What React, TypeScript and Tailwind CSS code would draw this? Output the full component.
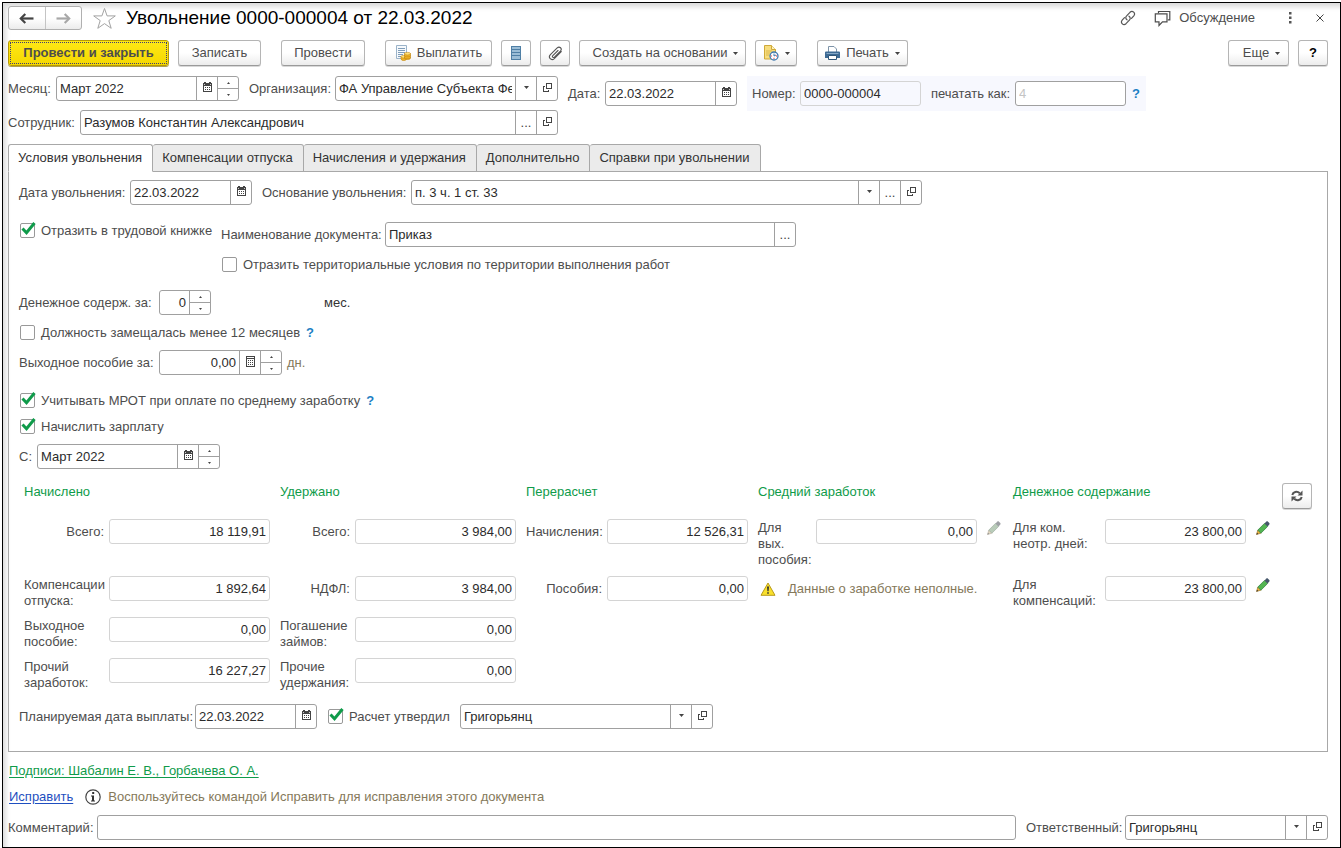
import React, { useState } from "react";
import { clsx } from "clsx";

/* ---------- icons ---------- */

const CalendarIcon = () => (
  <svg width="9" height="11" viewBox="0 0 9 11" shapeRendering="crispEdges">
    <path d="M0 1h9v9H0zM1 4v5h7V4z" fill="#444" fillRule="evenodd" />
    <path d="M1 0h2v1H1zM6 0h2v1H6z" fill="#444" />
    <path d="M1 2h1v1H1zM7 2h1v1H7z" fill="#ccc" />
    <path d="M2 5h1v1H2zM4 5h1v1H4zM6 5h1v1H6zM2 7h1v1H2zM4 7h1v1H4zM6 7h1v1H6z" fill="#444" />
  </svg>
);

const CalcIcon = () => (
  <svg width="9" height="11" viewBox="0 0 9 11" shapeRendering="crispEdges">
    <path d="M0 0h9v11H0zM1 3v7h7V3z" fill="#444" fillRule="evenodd" />
    <path d="M1 1h7v1H1z" fill="#fff" />
    <path d="M2 4h1v1H2zM4 4h1v1H4zM6 4h1v1H6zM2 6h1v1H2zM4 6h1v1H4zM6 6h1v1H6zM2 8h1v1H2zM4 8h1v1H4zM6 8h1v1H6z" fill="#444" />
  </svg>
);

const OpenIcon = () => (
  <svg width="9" height="9" viewBox="0 0 9 9" shapeRendering="crispEdges" fill="#444">
    <path d="M3 0h6v6H3zM4 1v4h4V1z" fillRule="evenodd" />
    <path d="M0 3h2v1H1v4h4V7h1v2H0z" />
  </svg>
);

const Caret = () => (
  <svg width="5" height="3" viewBox="0 0 5 3" className="shrink-0">
    <path d="M0 0h5L2.5 3z" fill="#444" />
  </svg>
);

const ArrowIcon = ({ color, flip }: { color: string; flip?: boolean }) => (
  <svg width="15" height="11" viewBox="0 0 15 11" className={flip ? "rotate-180" : ""}>
    <path d="M3 5.500H14.500" stroke={color} strokeWidth="2.200" />
    <path d="M6.300 1L1.800 5.500l4.500 4.500" fill="none" stroke={color} strokeWidth="2.200" />
  </svg>
);

const StarIcon = () => (
  <svg width="25" height="23" viewBox="0 0 25 23" fill="#fff" stroke="#a3a3a3">
    <path d="M12.500 1.500l2.600 7.400h8.200l-6.500 4.700 2.400 7.700-6.700-4.700-6.700 4.700 2.400-7.700-6.500-4.700h8.200z" />
  </svg>
);

const LinkIcon = () => (
  <svg width="16" height="16" viewBox="0 0 16 16" fill="none" stroke="#555" strokeWidth="1.200" strokeLinecap="round">
    <path d="M7 9.800c-1.500-1-1.600-2.700-.4-3.900L10 2.300c2.500-2.400 6 .8 3.800 3.500L11.500 8.300" />
    <path d="M9 6.200c1.500 1 1.600 2.700.4 3.900L6 13.700c-2.500 2.400-6-.8-3.800-3.500L4.500 7.700" />
  </svg>
);

const ChatIcon = () => (
  <svg width="17" height="17" viewBox="0 0 17 17" fill="none" stroke="#4d4d4d" strokeWidth="1.200">
    <path d="M4.500 3.300V1.500h11.300v8.300h-2" />
    <path d="M1.300 3.800h11.700v8H8.500L5 15.500v-3.700H1.300z" fill="#fff" />
  </svg>
);

const PayIcon = () => (
  <svg width="16" height="16" viewBox="0 0 16 16">
    <path d="M1.500.5h10v13h-10z" fill="#f6f9fc" stroke="#9bb3c9" />
    <path d="M3 3.500h7M3 5.500h7M3 7.500h7M3 9.500h5M3 11.500h4" stroke="#7f9db9" />
    <path d="M6 11.500v2.500c0 2 5.500 2 5.500 0v-2.500z" fill="#f0b323" stroke="#c08412" strokeWidth=".6" />
    <ellipse cx="8.700" cy="11.700" rx="2.800" ry="1.300" fill="#ffe27a" stroke="#c08412" strokeWidth=".6" />
    <path d="M9.500 8.500v4.500c0 2 6 2 6 0V8.500z" fill="#f0b323" stroke="#c08412" strokeWidth=".6" />
    <path d="M9.500 10.500c0 1.800 6 1.800 6 0M9.500 12.300c0 1.800 6 1.800 6 0" fill="none" stroke="#c08412" strokeWidth=".6" />
    <ellipse cx="12.500" cy="8.700" rx="3" ry="1.300" fill="#ffe27a" stroke="#c08412" strokeWidth=".6" />
  </svg>
);

const RegisterIcon = () => (
  <svg width="10" height="14" viewBox="0 0 10 14" shapeRendering="crispEdges">
    <path d="M0 0h10v14H0z" fill="#4f7fa5" />
    <path d="M1 1h8v2H1zM1 4h8v2H1zM1 7h8v2H1zM1 10h8v3H1z" fill="#9bbdd6" />
  </svg>
);

const ClipIcon = () => (
  <svg width="15" height="15" viewBox="0 0 15 15" fill="none" stroke="#555" strokeWidth="1.100" strokeLinecap="round">
    <path d="M10 4.500L4.800 9.600c-1.100 1.200.4 2.600 1.600 1.500l6-6c2.300-2.500-.9-5.300-3.200-3.200L2.400 8.600c-2.700 3 .9 6.700 3.900 4l7-6.900" />
  </svg>
);

const DocTimeIcon = () => (
  <svg width="16" height="16" viewBox="0 0 16 16">
    <path d="M1.500.5h7l4 4v9.500h-11z" fill="#f7dd7d" stroke="#cfa93a" />
    <path d="M8.500.5v4h4" fill="#fff3bf" stroke="#cfa93a" />
    <path d="M3 6h6M3 8h4M3 10h3" stroke="#dcb951" />
    <circle cx="11" cy="11" r="4" fill="#fff" stroke="#3f78ad" strokeWidth="1.300" />
    <path d="M11 11V8.500M11 11l2-1" stroke="#3f78ad" />
    <path d="M10.500 13.300h1M8.300 10.500v1M13.500 10.500v1" stroke="#e02020" />
  </svg>
);

const PrinterIcon = () => (
  <svg width="15" height="15" viewBox="0 0 15 15">
    <path d="M3.500 6V.5h5.500l2.500 2.500v3" fill="#fff" stroke="#7d93a8" />
    <path d="M1 5.500h13a1 1 0 0 1 1 1V12H0V6.500a1 1 0 0 1 1-1z" fill="#3d6a94" />
    <path d="M1.500 7.500h12" stroke="#86a8c6" />
    <path d="M3.500 9.500h8v4h-8z" fill="#fff" stroke="#2f5678" />
  </svg>
);

const RefreshIcon = () => (
  <svg width="12" height="12" viewBox="0 0 12 12" fill="none" stroke="#555" strokeWidth="2">
    <path d="M1.300 5C2 1.800 6 .6 8.800 3.200" />
    <path d="M10.700 7C10 10.200 6 11.400 3.200 8.800" />
    <path d="M11.500.5v5h-5zM.5 11.500v-5h5z" fill="#555" stroke="none" />
  </svg>
);

const PencilIcon = ({ dim }: { dim?: boolean }) => (
  <svg width="14" height="14" viewBox="0 0 14 14" className={dim ? "opacity-55 grayscale-[65%]" : ""}>
    <path d="M.5 13.500l1.300-4.400 3.100 3.100z" fill="#f2b63c" stroke="#8a6420" strokeWidth=".6" />
    <path d="M1.800 9.100l6.700-6.700 3.100 3.100-6.700 6.700z" fill="#52b552" stroke="#2d7a3a" strokeWidth=".7" />
    <path d="M8.500 2.400L10.400.6c.5-.4 1.200-.3 1.600.1l1.300 1.300c.4.4.4 1.100 0 1.600l-1.700 1.900z" fill="#46566b" />
    <path d="M.5 13.500l.5-1.800 1.300 1.300z" fill="#333" />
  </svg>
);

const WarnIcon = () => (
  <svg width="16" height="14" viewBox="0 0 16 14">
    <path d="M8 1l7 12.300H1z" fill="#f9e02c" stroke="#b89a1a" strokeLinejoin="round" />
    <path d="M7 4.500h2l-.4 4.700H7.400zM7.200 10.200h1.600v1.600H7.200z" fill="#333" />
  </svg>
);

const InfoIcon = () => (
  <svg width="16" height="16" viewBox="0 0 16 16">
    <circle cx="8" cy="8" r="7.200" fill="#fff" stroke="#444" strokeWidth="1.200" />
    <path d="M7.200 3h2v2h-2zM6 6.500h3v5h1V12.500H6v-1h1v-4H6z" fill="#333" />
  </svg>
);

/* ---------- controls ---------- */

type Extra = "calendar" | "calc" | "spin" | "list" | "dots" | "open";

const extraLabel: Record<Extra, string> = {
  calendar: "Календарь",
  calc: "Калькулятор",
  spin: "",
  list: "Список",
  dots: "Выбрать",
  open: "Открыть",
};

const FieldButton = ({ kind }: { kind: Extra }) => {
  if (kind === "spin") {
    return (
      <span className="flex w-[21px] shrink-0 flex-col border-l border-[#a0a0a0]">
        <button type="button" aria-label="Больше" className="flex flex-1 items-center justify-center border-b border-[#a0a0a0]">
          <svg width="3" height="2" viewBox="0 0 3 2"><path d="M0 2h3L1.500 0z" fill="#444" /></svg>
        </button>
        <button type="button" aria-label="Меньше" className="flex flex-1 items-center justify-center">
          <svg width="3" height="2" viewBox="0 0 3 2"><path d="M0 0h3L1.500 2z" fill="#444" /></svg>
        </button>
      </span>
    );
  }
  return (
    <button
      type="button"
      aria-label={extraLabel[kind]}
      className="flex w-[21px] shrink-0 items-center justify-center border-l border-[#a0a0a0] pb-0.5 text-[#444]"
    >
      {kind === "calendar" && <CalendarIcon />}
      {kind === "calc" && <CalcIcon />}
      {kind === "list" && <Caret />}
      {kind === "dots" && <span className="pt-0.5">...</span>}
      {kind === "open" && <OpenIcon />}
    </button>
  );
};

type FieldProps = {
  id: string;
  value?: string;
  placeholder?: string;
  extras?: Extra[];
  right?: boolean;
  readOnly?: boolean;
  className?: string;
};

const Field = ({ id, value = "", placeholder, extras = [], right, readOnly, className }: FieldProps) => (
  <div
    className={clsx(
      "flex h-[25px] shrink-0 rounded-[3px] border",
      readOnly ? "border-[#d4d4d4] bg-transparent" : "border-[#a0a0a0] bg-white",
      className
    )}
  >
    <input
      id={id}
      defaultValue={value}
      placeholder={placeholder}
      readOnly={readOnly}
      className={clsx(
        "w-full min-w-0 flex-1 bg-transparent px-[3px] text-[#2b2b2b] outline-none placeholder:text-[#c4c4c4]",
        right && "text-right"
      )}
    />
    {extras.map((kind) => (
      <FieldButton key={kind} kind={kind} />
    ))}
  </div>
);

const Check = ({ id, label, checked = false }: { id: string; label: string; checked?: boolean }) => (
  <label htmlFor={id} className="flex h-[18px] items-center gap-[5px] whitespace-nowrap">
    <span className="relative size-4">
      <input
        id={id}
        type="checkbox"
        defaultChecked={checked}
        className="peer block size-[15px] appearance-none rounded-[2px] border border-[#999] bg-white"
      />
      <svg width="15" height="14" viewBox="0 0 15 14" className="pointer-events-none absolute left-px -top-px hidden peer-checked:block">
        <path d="M1.500 6.500l4 4.200L13.500 1" fill="none" stroke="#0f9b4a" strokeWidth="3" />
      </svg>
    </span>
    {label}
  </label>
);

const ToolButton = ({ className, children, label }: { className?: string; children: React.ReactNode; label?: string }) => (
  <button
    type="button"
    aria-label={label}
    className={clsx(
      "flex h-[26px] shrink-0 items-center justify-center whitespace-nowrap rounded-[3px] border border-[#b5b5b5] border-b-[#9a9a9a] bg-linear-to-b from-white from-50% to-[#ececec] shadow-[0_1px_0_#d8d8d8]",
      className
    )}
  >
    {children}
  </button>
);

const Help = () => (
  <button type="button" aria-label="Справка" className="px-1.5 font-bold leading-4 text-[#1c7fc4]">
    ?
  </button>
);

/* ---------- totals ---------- */

type TotalRow = { id: string; lines: string[]; value: string; pencil?: "on" | "dim" };

const totals: { title: string; labelWidth: string; fieldWidth: string; rows: TotalRow[] }[] = [
  {
    title: "Начислено",
    labelWidth: "w-[85px]",
    fieldWidth: "w-[161px]",
    rows: [
      { id: "acc-all", lines: ["Всего:"], value: "18 119,91" },
      { id: "acc-comp", lines: ["Компенсации", "отпуска:"], value: "1 892,64" },
      { id: "acc-sev", lines: ["Выходное", "пособие:"], value: "0,00" },
      { id: "acc-other", lines: ["Прочий", "заработок:"], value: "16 227,27" },
    ],
  },
  {
    title: "Удержано",
    labelWidth: "w-[75px]",
    fieldWidth: "w-[161px]",
    rows: [
      { id: "ded-all", lines: ["Всего:"], value: "3 984,00" },
      { id: "ded-tax", lines: ["НДФЛ:"], value: "3 984,00" },
      { id: "ded-loan", lines: ["Погашение", "займов:"], value: "0,00" },
      { id: "ded-other", lines: ["Прочие", "удержания:"], value: "0,00" },
    ],
  },
  {
    title: "Перерасчет",
    labelWidth: "w-[81px]",
    fieldWidth: "w-[141px]",
    rows: [
      { id: "re-acc", lines: ["Начисления:"], value: "12 526,31" },
      { id: "re-ben", lines: ["Пособия:"], value: "0,00" },
    ],
  },
  {
    title: "Средний заработок",
    labelWidth: "w-[58px]",
    fieldWidth: "w-[161px]",
    rows: [{ id: "avg", lines: ["Для", "вых.", "пособия:"], value: "0,00", pencil: "dim" }],
  },
  {
    title: "Денежное содержание",
    labelWidth: "w-[92px]",
    fieldWidth: "w-[141px]",
    rows: [
      { id: "pay-days", lines: ["Для ком.", "неотр. дней:"], value: "23 800,00", pencil: "on" },
      { id: "pay-comp", lines: ["Для", "компенсаций:"], value: "23 800,00", pencil: "on" },
    ],
  },
];

const Totals = () => (
  <div className="mt-3.5 flex items-start gap-2.5 pl-[5px]">
    {totals.map((group) => (
      <div key={group.title} className="shrink-0">
        <h3 className="h-9 leading-[17px] text-[#0f9b4a]">{group.title}</h3>
        <div className="flex flex-col">
          {group.rows.map((row, i) => (
            <div key={row.id} className={clsx("flex items-start", i === 0 ? "h-[57px]" : i === 3 ? "h-[25px]" : "h-[41px]")}>
              <label
                htmlFor={row.id}
                className={clsx(
                  "shrink-0 whitespace-nowrap",
                  group.labelWidth,
                  row.lines.length === 1 ? "pr-[5px] text-right leading-[25px]" : "pt-px leading-4"
                )}
              >
                {row.lines.map((line) => (
                  <span key={line} className="block">{line}</span>
                ))}
              </label>
              <Field id={row.id} value={row.value} right readOnly className={group.fieldWidth} />
              {row.pencil && (
                <button type="button" aria-label="Изменить" className="ml-2.5 mt-0.5 w-4">
                  <PencilIcon dim={row.pencil === "dim"} />
                </button>
              )}
            </div>
          ))}
          {group.title === "Средний заработок" && (
            <p className="flex h-[25px] items-center gap-3 pl-0.5 text-[#85795a]">
              <WarnIcon />
              Данные о заработке неполные.
            </p>
          )}
        </div>
      </div>
    ))}
    <ToolButton label="Обновить" className="w-[30px]">
      <RefreshIcon />
    </ToolButton>
  </div>
);

/* ---------- page ---------- */

const tabs = [
  "Условия увольнения",
  "Компенсации отпуска",
  "Начисления и удержания",
  "Дополнительно",
  "Справки при увольнении",
];

const App = () => {
  const [tab, setTab] = useState(0);

  return (
    <div className="bg-white pl-0.5 pt-0.5 font-['Liberation_Sans',Arial,sans-serif] text-[13px] leading-4 text-[#4d4d4d]">
      <div className="border border-black bg-white pb-[7px] pl-[5px] pr-3 pt-[3px] shadow-[inset_5px_6px_5px_-2px_#dcdcdc]">
        {/* title */}
        <header className="flex h-6 items-center">
          <div className="flex h-6 w-[74px] rounded-[3px] border border-[#b0b0b0] bg-linear-to-b from-white from-50% to-[#ececec]">
            <button type="button" aria-label="Назад" className="flex flex-1 items-center justify-center border-r border-[#c4c4c4]">
              <ArrowIcon color="#444" />
            </button>
            <button type="button" aria-label="Вперед" className="flex flex-1 items-center justify-center">
              <ArrowIcon color="#a8a8a8" flip />
            </button>
          </div>
          <button type="button" aria-label="В избранное" className="ml-2.5">
            <StarIcon />
          </button>
          <h1 className="ml-[9px] text-[19px] leading-6 text-black">Увольнение 0000-000004 от 22.03.2022</h1>
          <div className="ml-auto flex items-center">
            <button type="button" aria-label="Ссылка"><LinkIcon /></button>
            <button type="button" className="ml-[18px] flex items-center gap-2">
              <ChatIcon />
              Обсуждение
            </button>
            <button type="button" aria-label="Меню" className="ml-[33px]">
              <svg width="4" height="12" viewBox="0 0 4 12" fill="#555">
                <path d="M1 0h2.500v2.500H1zM1 4.500h2.500V7H1zM1 9h2.500v2.500H1z" />
              </svg>
            </button>
            <button type="button" aria-label="Закрыть" className="ml-6 mr-1">
              <svg width="8" height="8" viewBox="0 0 8 8" stroke="#444"><path d="M.5.5l7 7M7.500.5l-7 7" /></svg>
            </button>
          </div>
        </header>

        {/* toolbar */}
        <div className="mt-2.5 flex">
          <button
            type="button"
            className="h-[26px] w-[161px] rounded-[3px] border border-[#b89b00] bg-linear-to-b from-[#ffe815] to-[#f5d800] p-px font-bold shadow-[0_1px_0_#b0a050]"
          >
            <span className="flex h-full items-center justify-center whitespace-nowrap border border-dotted border-[#3c3c78]">
              Провести и закрыть
            </span>
          </button>
          <ToolButton className="ml-[9px] w-[83px]">Записать</ToolButton>
          <ToolButton className="ml-5 w-[84px]">Провести</ToolButton>
          <ToolButton className="ml-5 w-[107px] gap-1.5"><PayIcon />Выплатить</ToolButton>
          <ToolButton label="Реестр" className="ml-[9px] w-[30px]"><RegisterIcon /></ToolButton>
          <ToolButton label="Файлы" className="ml-[9px] w-[30px]"><ClipIcon /></ToolButton>
          <ToolButton className="ml-[9px] w-[167px] gap-1.5 pl-1.5">Создать на основании<Caret /></ToolButton>
          <ToolButton label="Отчеты" className="ml-[9px] w-[42px] gap-1.5"><DocTimeIcon /><Caret /></ToolButton>
          <ToolButton className="ml-5 w-[91px] gap-1.5"><PrinterIcon />Печать<Caret /></ToolButton>
          <ToolButton className="ml-auto w-[61px] gap-1.5 pl-1.5">Еще<Caret /></ToolButton>
          <ToolButton className="ml-[9px] w-[30px] font-bold text-black">?</ToolButton>
        </div>

        {/* document head */}
        <div className="mt-2.5 flex items-start">
          <div className="flex w-[550px] shrink-0 flex-col gap-[9px]">
            <div className="flex items-center">
              <label htmlFor="month" className="w-12">Месяц:</label>
              <Field id="month" value="Март 2022" extras={["calendar", "spin"]} className="w-[183px]" />
              <label htmlFor="org" className="ml-2.5 w-[86px]">Организация:</label>
              <Field id="org" value="ФА Управление Субъекта Федерации" extras={["list", "open"]} className="flex-1" />
            </div>
            <div className="flex items-center">
              <label htmlFor="person" className="w-[72px]">Сотрудник:</label>
              <Field id="person" value="Разумов Константин Александрович" extras={["dots", "open"]} className="flex-1" />
            </div>
          </div>
          <div className="ml-2.5 flex h-[35px] items-center">
            <label htmlFor="date" className="w-[37px]">Дата:</label>
            <Field id="date" value="22.03.2022" extras={["calendar"]} className="w-[132px]" />
          </div>
          <div className="ml-2.5 flex h-[35px] items-center bg-[#f7f8fe] pl-[5px]">
            <label htmlFor="num" className="w-12">Номер:</label>
            <Field id="num" value="0000-000004" readOnly className="w-[121px]" />
            <label htmlFor="print-as" className="ml-2.5 w-[84px]">печатать как:</label>
            <Field id="print-as" placeholder="4" className="w-[111px]" />
            <Help />
          </div>
        </div>

        {/* tabs */}
        <div role="tablist" className="mt-[9px] flex">
          {tabs.map((name, i) => (
            <button
              key={name}
              type="button"
              role="tab"
              aria-selected={tab === i}
              onClick={() => setTab(i)}
              className={clsx(
                "relative -mb-px h-7 whitespace-nowrap rounded-t-[3px] border border-[#a8a8a8] pl-[9px] pr-2.5 text-[#333]",
                i > 0 && "border-l-0",
                tab === i ? "z-10 border-b-white bg-white" : "bg-[#ebebeb]"
              )}
            >
              {name}
            </button>
          ))}
        </div>

        <section className="border border-[#a8a8a8] px-2.5 pb-[22px] pt-2">
          <div className="flex items-center">
            <label htmlFor="fire-date" className="w-[111px]">Дата увольнения:</label>
            <Field id="fire-date" value="22.03.2022" extras={["calendar"]} className="w-[122px]" />
            <label htmlFor="reason" className="ml-2.5 w-[149px]">Основание увольнения:</label>
            <Field id="reason" value="п. 3 ч. 1 ст. 33" extras={["list", "dots", "open"]} className="w-[511px]" />
          </div>

          <div className="mt-[17px] flex items-start">
            <div className="w-[202px] pl-px">
              <Check id="book" label="Отразить в трудовой книжке" checked />
            </div>
            <div>
              <div className="flex items-center">
                <label htmlFor="doc-name" className="w-[164px]">Наименование документа:</label>
                <Field id="doc-name" value="Приказ" extras={["dots"]} className="w-[411px]" />
              </div>
              <div className="mt-[9px] pl-px">
                <Check id="territory" label="Отразить территориальные условия по территории выполнения работ" />
              </div>
            </div>
          </div>

          <div className="mt-4 flex items-center">
            <label htmlFor="months" className="w-[140px]">Денежное содерж. за:</label>
            <Field id="months" value="0" right extras={["spin"]} className="w-[52px]" />
            <span className="ml-[113px] text-[#333]">мес.</span>
          </div>
          <div className="mt-[9px] flex pl-px">
            <Check id="less-year" label="Должность замещалась менее 12 месяцев" />
            <Help />
          </div>
          <div className="mt-2 flex items-center">
            <label htmlFor="severance" className="w-[140px]">Выходное пособие за:</label>
            <Field id="severance" value="0,00" right extras={["calc", "spin"]} className="w-[123px]" />
            <span className="ml-[5px] text-[#85795a]">дн.</span>
          </div>
          <div className="mt-[17px] flex pl-px">
            <Check id="min-wage" label="Учитывать МРОТ при оплате по среднему заработку" checked />
            <Help />
          </div>
          <div className="mt-2 pl-px">
            <Check id="salary" label="Начислить зарплату" checked />
          </div>
          <div className="mt-2 flex items-center">
            <label htmlFor="since" className="w-[18px]">С:</label>
            <Field id="since" value="Март 2022" extras={["calendar", "spin"]} className="w-[183px]" />
          </div>

          <Totals />

          <div className="mt-[21px] flex items-center">
            <label htmlFor="pay-date" className="w-44">Планируемая дата выплаты:</label>
            <Field id="pay-date" value="22.03.2022" extras={["calendar"]} className="w-[122px]" />
            <div className="ml-[11px] w-[132px]">
              <Check id="approved" label="Расчет утвердил" checked />
            </div>
            <Field id="approver" value="Григорьянц" extras={["list", "open"]} className="w-[253px]" />
          </div>
        </section>

        {/* footer */}
        <div className="mt-[9px] flex h-5 items-center pl-px">
          <a href="#signatures" className="text-[#0f9b4a] underline underline-offset-2">
            Подписи: Шабалин Е. В., Горбачева О. А.
          </a>
        </div>
        <div className="mt-1.5 flex h-5 items-center pl-px">
          <a href="#fix" className="text-[#1f4fc0] underline underline-offset-2">Исправить</a>
          <span className="ml-3 flex items-center gap-[7px] text-[#85795a]">
            <InfoIcon />
            Воспользуйтесь командой Исправить для исправления этого документа
          </span>
        </div>
        <div className="mt-2 flex items-center">
          <label htmlFor="comment" className="w-[89px]">Комментарий:</label>
          <Field id="comment" className="flex-1" />
          <label htmlFor="owner" className="ml-2.5 w-[99px]">Ответственный:</label>
          <Field id="owner" value="Григорьянц" extras={["list", "open"]} className="w-[203px]" />
        </div>
      </div>
    </div>
  );
};

export default App;
